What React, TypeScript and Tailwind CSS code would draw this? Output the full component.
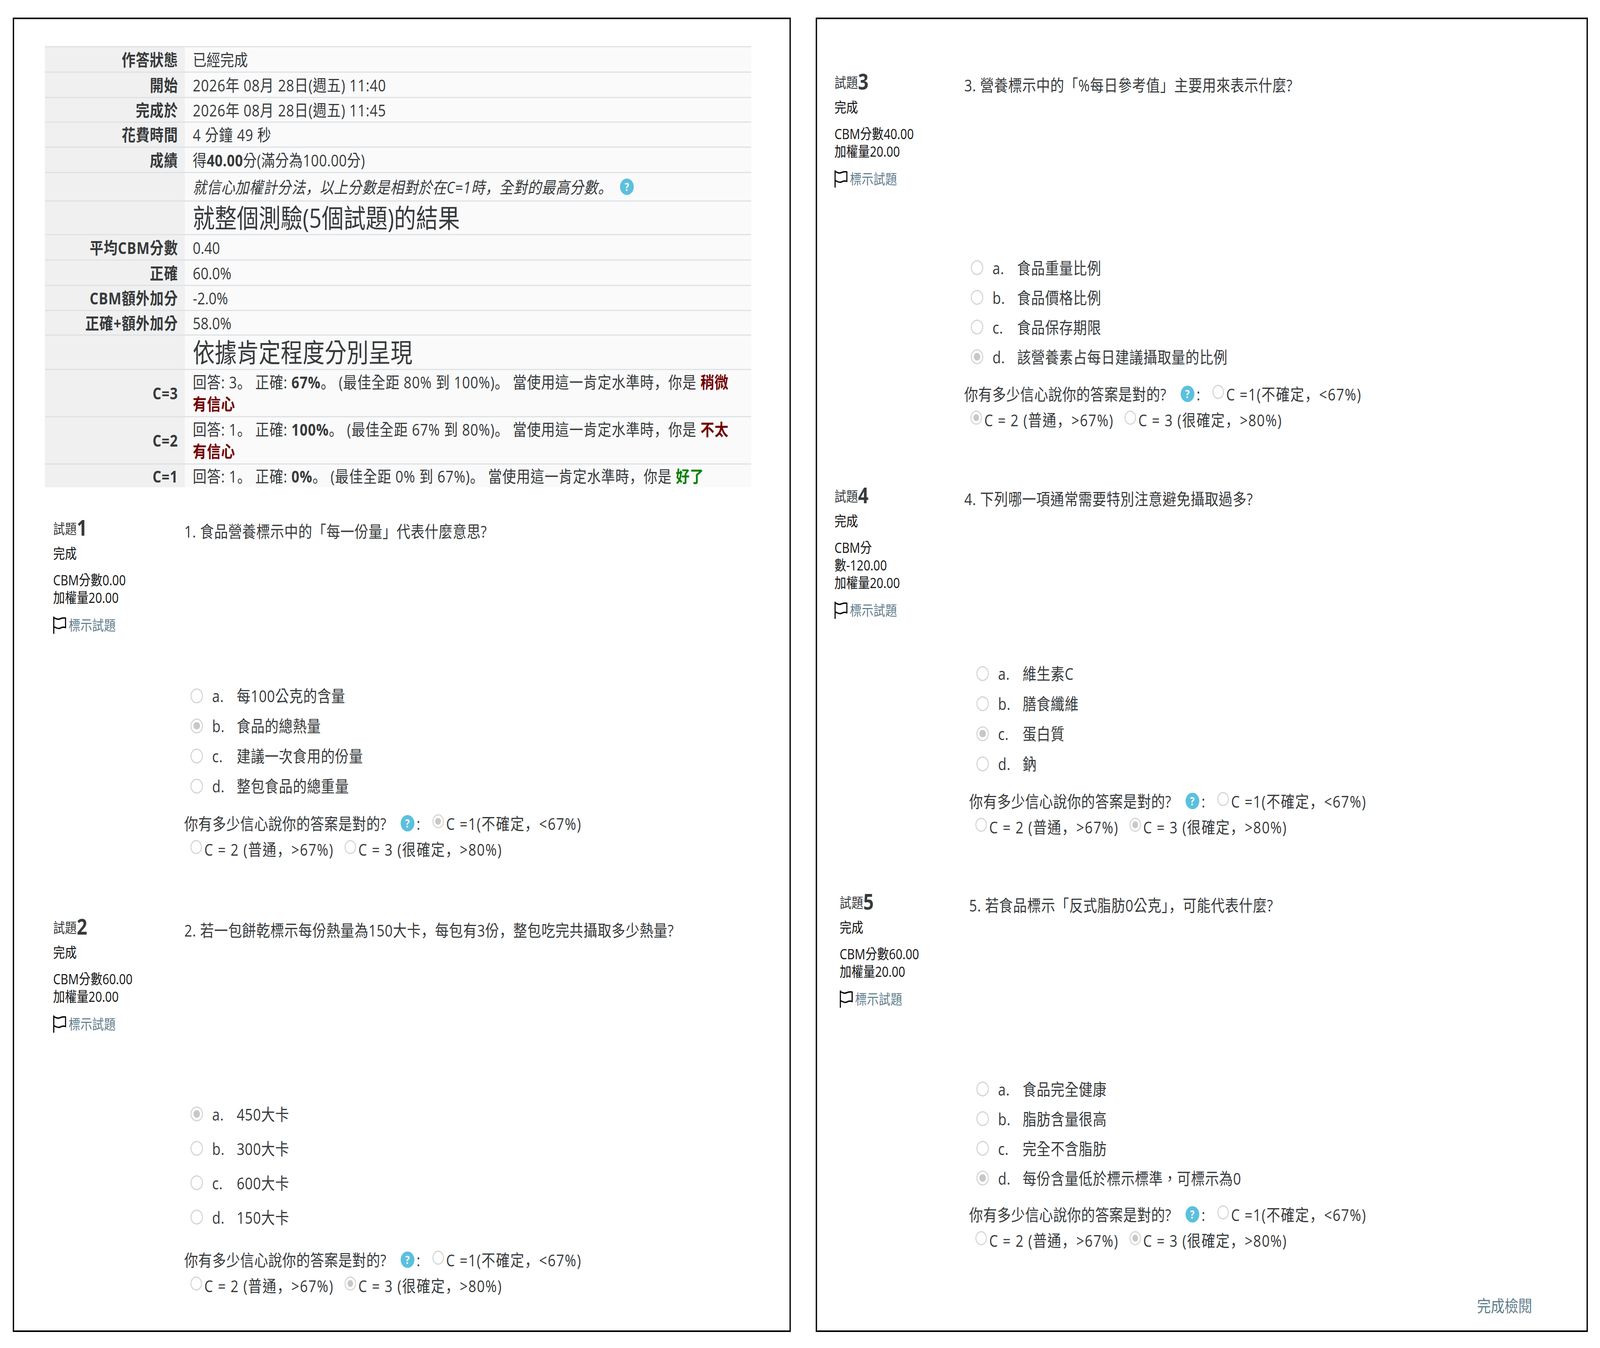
import React from "react";

// CJK punctuation sits bottom-left in the reference, so it takes the JP face
function T({ children }: { children: string }) {
  return (
    <>
      {children.split(/([，。「」])/).map((part, i) =>
        /^[，。「」]$/.test(part) ? (
          <span key={i} className="font-['Open_Sans','Noto_Sans_CJK_JP',sans-serif]">{part}</span>
        ) : (
          part
        )
      )}
    </>
  );
}

function HelpIcon({ className }: { className: string }) {
  return (
    <span className={"inline-flex h-[42px] w-[42px] shrink-0 items-center justify-center rounded-full bg-[#5bc0de] text-[28px] leading-none font-bold text-white " + className}>
      ?
    </span>
  );
}

function Row({ label, h, children }: { label?: string; h: string; children: React.ReactNode }) {
  return (
    <div className={"flex border-t-[3px] border-[#dee2e6] " + h}>
      <div className="flex w-[427px] shrink-0 items-center justify-end bg-[#f0f0f0] pr-[21px] font-bold tracking-[1px]">{label}</div>
      <div className="flex flex-1 items-center bg-[#fafafa] pl-[24px] whitespace-nowrap">{children}</div>
    </div>
  );
}

function Summary() {
  return (
    <div className="w-[2154px]">
      <Row label="作答狀態" h="h-[65px]">已經完成</Row>
      <Row label="開始" h="h-[65px]"><span className="tracking-[1px]">2026年 08月 28日(週五) 11:40</span></Row>
      <Row label="完成於" h="h-[63px]"><span className="tracking-[1px]">2026年 08月 28日(週五) 11:45</span></Row>
      <Row label="花費時間" h="h-[64px]"><span className="tracking-[1px]">4 分鐘 49 秒</span></Row>
      <Row label="成績" h="h-[65px]">
        <span className="tracking-[0.5px]">得<b>40.00</b>分(滿分為100.00分)</span>
      </Row>
      <Row h="h-[73px]">
        <i className="tracking-[1px]"><T>就信心加權計分法，以上分數是相對於在C=1時，全對的最高分數。</T></i>
        <HelpIcon className="ml-[24px]" />
      </Row>
      <Row h="h-[86px]"><span className="text-[67px]">就整個測驗(5個試題)的結果</span></Row>
      <Row label="平均CBM分數" h="h-[65px]">0.40</Row>
      <Row label="正確" h="h-[65px]">60.0%</Row>
      <Row label="CBM額外加分" h="h-[64px]">-2.0%</Row>
      <Row label="正確+額外加分" h="h-[63px]">58.0%</Row>
      <Row h="h-[88px]"><span className="text-[67px]">依據肯定程度分別呈現</span></Row>
      <Row label="C=3" h="h-[121px] leading-[56px]">
        <span className="tracking-[1.1px]">
          <T>回答: 3。 正確: </T><b>67%</b><T>。 (最佳全距 80% 到 100%)。 當使用這一肯定水準時，你是 </T>
          <b className="text-[#700000]">稍微<br />有信心</b>
        </span>
      </Row>
      <Row label="C=2" h="h-[121px] leading-[56px]">
        <span className="tracking-[1.1px]">
          <T>回答: 1。 正確: </T><b>100%</b><T>。 (最佳全距 67% 到 80%)。 當使用這一肯定水準時，你是 </T>
          <b className="text-[#700000]">不太<br />有信心</b>
        </span>
      </Row>
      <Row label="C=1" h="h-[61px]">
        <span className="tracking-[1.1px]">
          <T>回答: 1。 正確: </T><b>0%</b><T>。 (最佳全距 0% 到 67%)。 當使用這一肯定水準時，你是 </T>
          <b className="text-[#008000]">好了</b>
        </span>
      </Row>
    </div>
  );
}

function Flag() {
  return (
    <svg viewBox="0 0 40 44" className="h-[44px] w-[40px] shrink-0 fill-none stroke-black stroke-[3.5]">
      <path d="M2 0V44" />
      <path d="M2 3C10 6 14 8 20 6S32 3 38 4V28C30 26 26 28 20 30S8 28 2 26" />
    </svg>
  );
}

function Radio({ checked, size }: { checked?: boolean; size: string }) {
  return (
    <span className={"flex shrink-0 items-center justify-center rounded-full border-[3px] border-[#d4d4d4] bg-white " + size}>
      {checked && <span className="h-[60%] w-[60%] rounded-full bg-[#c8c8c8]" />}
    </span>
  );
}

function Conf({ pick, indent }: { pick: number; indent: string }) {
  const small = "h-[36px] w-[35px] mb-[10px] mr-[7px]";
  return (
    <div className="whitespace-nowrap">
      <div className="flex h-[66px] items-center">
        <span className="tracking-[0.7px]">你有多少信心說你的答案是對的?</span>
        <HelpIcon className="ml-[43px]" />
        <span className="ml-[7px] mr-[37px]">:</span>
        <Radio checked={pick === 1} size={small} />
        <span className="tracking-[2px]"><T>C =1(不確定，&lt;67%)</T></span>
      </div>
      <div className={"flex h-[66px] items-center " + indent}>
        <Radio checked={pick === 2} size={small} />
        <span className="tracking-[2px]"><T>C = 2 (普通，&gt;67%)</T></span>
        <span className="w-[33px]" />
        <Radio checked={pick === 3} size={small} />
        <span className="tracking-[2px]"><T>C = 3 (很確定，&gt;80%)</T></span>
      </div>
    </div>
  );
}

type QuestionProps = {
  no: number;
  text: string;
  score: string;
  options: string[];
  picked: number;
  conf: number;
  outer: string;
  side: string;
  textShift?: string;
  gap: string;
  rowH: string;
  confGap: string;
  optIndent: string;
};

function Question(q: QuestionProps) {
  return (
    <div className={"flex " + q.outer}>
      <div className={"shrink-0 text-[36px] leading-[45px] text-[#111] " + q.side}>
        <div className="flex h-[60px] items-end text-[#373a3c]">
          <span className="leading-[50px]">試題</span>
          <span className="text-[56px] leading-[60px] font-bold">{q.no}</span>
        </div>
        <div className="mt-[15px]">完成</div>
        <div className="mt-[23px] w-[270px]">CBM分數{q.score}</div>
        <div>加權量20.00</div>
        <div className="mt-[24px] flex h-[48px] items-center gap-[7px]">
          <Flag />
          <span className="text-[#5f7d8c]">標示試題</span>
        </div>
      </div>
      <div className="flex-1 leading-[45px]">
        <div className={"pt-[18px] tracking-[0.8px] " + (q.textShift ?? "")}><T>{q.text}</T></div>
        <div className={q.gap}>
          {q.options.map((o, i) => (
            <div key={o} className={"flex items-center tracking-[0.8px] " + q.rowH + " " + q.optIndent}>
              <Radio checked={i === q.picked} size="h-[38px] w-[38px] mr-[28px]" />
              <span className="w-[75px]">{"abcd"[i]}.</span>
              <span>{o}</span>
            </div>
          ))}
        </div>
        <div className={q.confGap}>
          <Conf pick={q.conf} indent="pl-[19px]" />
        </div>
      </div>
    </div>
  );
}

export default function App() {
  // the page is drawn for 4880px; narrower windows get it squeezed to fit
  const fit = Math.min(1, window.innerWidth / 4880);
  return (
    <div className="h-[3450px] w-full overflow-hidden bg-white">
      <div
        className="flex h-[3450px] w-[4880px] origin-top-left bg-white pt-[45px] pl-[39px] font-['Open_Sans','Noto_Sans_CJK_TC',sans-serif] text-[42px] text-[#373a3c]"
        style={{ transform: `scaleX(${fit})` }}
      >
        <div className="h-[3364px] w-[2373px] border-4 border-black pt-[69px]">
          <div className="pl-[94px]">
            <Summary />
          </div>
          <Question
            no={1}
            text="1. 食品營養標示中的「每一份量」代表什麼意思?"
            score="0.00"
            options={["每100公克的含量", "食品的總熱量", "建議一次食用的份量", "整包食品的總重量"]}
            picked={1}
            conf={1}
            outer="ml-[119px] mt-[72px]"
            side="w-[400px]"
            gap="mt-[360px]"
            rowH="h-[77px]"
            confGap="mt-[24px]"
            optIndent="pl-[19px]"
          />
          <Question
            no={2}
            text="2. 若一包餅乾標示每份熱量為150大卡，每包有3份，整包吃完共攝取多少熱量?"
            score="60.00"
            options={["450大卡", "300大卡", "600大卡", "150大卡"]}
            picked={0}
            conf={3}
            outer="ml-[119px] mt-[134px]"
            side="w-[400px]"
            gap="mt-[404px]"
            rowH="h-[88px]"
            confGap="mt-[32px]"
            optIndent="pl-[19px]"
          />
        </div>
        <div className="ml-[76px] h-[3364px] w-[2355px] border-4 border-black pt-[128px]">
          <Question
            no={3}
            text="3. 營養標示中的「%每日參考值」主要用來表示什麼?"
            score="40.00"
            options={["食品重量比例", "食品價格比例", "食品保存期限", "該營養素占每日建議攝取量的比例"]}
            picked={3}
            conf={2}
            outer="ml-[53px]"
            side="w-[396px]"
            gap="mt-[407px]"
            rowH="h-[76px]"
            confGap="mt-[24px]"
            optIndent="pl-[20px]"
          />
          <Question
            no={4}
            text="4. 下列哪一項通常需要特別注意避免攝取過多?"
            score="-120.00"
            options={["維生素C", "膳食纖維", "蛋白質", "鈉"]}
            picked={2}
            conf={3}
            outer="ml-[53px] mt-[129px]"
            side="w-[411px]"
            textShift="-ml-[15px]"
            gap="mt-[386px]"
            rowH="h-[77px]"
            confGap="mt-[24px]"
            optIndent="pl-[22px]"
          />
          <Question
            no={5}
            text="5. 若食品標示「反式脂肪0公克」，可能代表什麼?"
            score="60.00"
            options={["食品完全健康", "脂肪含量很高", "完全不含脂肪", "每份含量低於標示標準，可標示為0"]}
            picked={3}
            conf={3}
            outer="ml-[69px] mt-[127px]"
            side="w-[395px]"
            gap="mt-[410px]"
            rowH="h-[76px]"
            confGap="mt-[22px]"
            optIndent="pl-[22px]"
          />
          <div className="mt-[112px] pr-[166px] text-right leading-[45px] text-[#5f7d8c]">完成檢閱</div>
        </div>
      </div>
    </div>
  );
}
